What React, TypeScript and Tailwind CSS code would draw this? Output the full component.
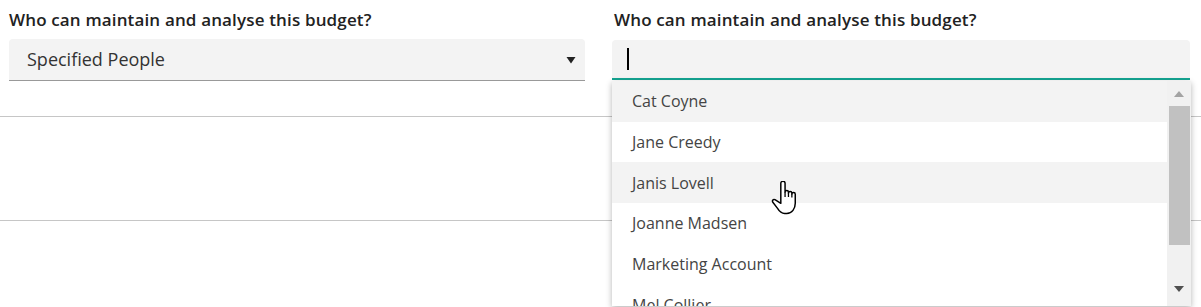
import React from "react";

const people = ["Cat Coyne", "Jane Creedy", "Janis Lovell", "Joanne Madsen", "Marketing Account", "Mel Collier"];

function Hand() {
  return (
    <svg width="26" height="34" viewBox="0 0 24 32" className="absolute left-[771px] top-[181px]">
      <path
        d="M9 15 V2.2 a2 2 0 0 1 4 0 V10.5 a1.6 1.6 0 0 1 3.2 0 V11.5 a1.6 1.6 0 0 1 3.2 0 V12.5 a1.6 1.6 0 0 1 3.2 0 V21 c0 5 -3 9.5 -8 9.5 h-2 c-3 0 -5 -2 -6.5 -4.5 L1.5 20 c-1 -1.6 0.4 -3.2 2 -2.4 L9 21 Z"
        fill="#fff"
        stroke="#000"
        strokeWidth="1.4"
        strokeLinejoin="round"
      />
      <path d="M13 10.5 V15 M16.2 11.5 V15 M19.4 12.5 V15.5" stroke="#000" strokeWidth="1.2" fill="none" />
    </svg>
  );
}

export default function App() {
  return (
    <div className="relative w-[1201px] h-[307px] overflow-hidden bg-white" style={{ fontFamily: "'Open Sans', Lato, sans-serif" }}>
      <div className="flex pl-[9px] pr-[11px] gap-[27px]">
        <div className="w-[576px]">
          <div className="pt-[8px] h-[39px] text-[17px] leading-6 font-semibold tracking-[0.15px] text-[#222]">Who can maintain and analyse this budget?</div>
          <div className="h-[42px] bg-[#f3f3f3] rounded-t-[4px] border-b border-[#999] flex items-center pl-[18px] pr-[8px] text-[18px] text-[#333]">
            <span className="flex-1">Specified People</span>
            <svg width="10" height="8" viewBox="0 0 10 8" className="mr-[1px]"><path d="M0.5 1 H9.5 L5 7.5 Z" fill="#222" /></svg>
          </div>
        </div>
        <div className="w-[578px] relative">
          <div className="pt-[8px] h-[40px] text-[17px] leading-6 font-semibold tracking-[0.15px] text-[#222] pl-[2px]">Who can maintain and analyse this budget?</div>
          <div className="h-[40px] bg-[#f3f3f3] rounded-t-[4px] border-b-2 border-[#14a491] flex items-center pl-[15px]">
            <div className="w-[2px] h-[22px] bg-black" />
          </div>
        </div>
      </div>
      <div className="mt-[35px] border-t border-[#c6c6c6] h-[104px]" />
      <div className="border-t border-[#c6c6c6]" />

      <div className="absolute left-[612px] top-[81px] w-[579px] h-[225px] bg-white shadow-[0_2px_6px_rgba(0,0,0,0.3)] flex overflow-hidden">
        <div className="flex-1 flex flex-col">
          {people.map((p, i) => (
            <div
              key={p}
              className={`h-[40.7px] shrink-0 flex items-center pl-[20px] text-[16px] text-[#444] ${i === 0 || i === 2 ? "bg-[#f3f3f3]" : "bg-white"}`}
            >
              {p}
            </div>
          ))}
        </div>
        <div className="w-[24px] bg-[#f1f1f1] flex flex-col items-center relative">
          <div className="h-[25px] flex items-center justify-center">
            <svg width="10" height="6" viewBox="0 0 10 6"><path d="M0 6 H10 L5 0 Z" fill="#a3a3a3" /></svg>
          </div>
          <div className="w-[21px] h-[139px] bg-[#c1c1c1]" />
          <div className="flex-1" />
          <div className="h-[26px] flex items-start justify-center pt-[6px]">
            <svg width="10" height="6" viewBox="0 0 10 6"><path d="M0 0 H10 L5 6 Z" fill="#505050" /></svg>
          </div>
        </div>
      </div>
      <Hand />
    </div>
  );
}
